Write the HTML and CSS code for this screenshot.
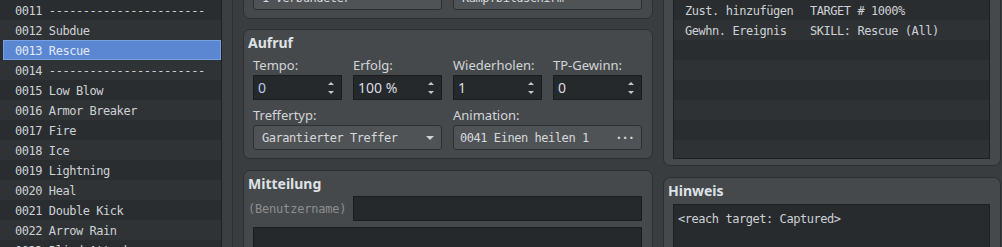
FILE: index.html
```html
<!DOCTYPE html>
<html lang="de">
<head>
<meta charset="utf-8">
<title>Fertigkeiten</title>
<link rel="stylesheet" href="styles.css">
</head>
<body>
<div class="app">
  <aside class="sidebar">
    <ul class="list">
      <li class="row">0011 -----------------------</li>
      <li class="row">0012 Subdue</li>
      <li class="row sel">0013 Rescue</li>
      <li class="row">0014 -----------------------</li>
      <li class="row">0015 Low Blow</li>
      <li class="row">0016 Armor Breaker</li>
      <li class="row">0017 Fire</li>
      <li class="row">0018 Ice</li>
      <li class="row">0019 Lightning</li>
      <li class="row">0020 Heal</li>
      <li class="row">0021 Double Kick</li>
      <li class="row">0022 Arrow Rain</li>
      <li class="row">0023 Blind Attack</li>
    </ul>
  </aside>
  <div class="splitter"></div>
  <main class="main">
    <div class="col mid">
      <section class="box">
        <div class="grid">
          <div class="field span2">
            <span class="lbl">Umfang:</span>
            <div class="combo"><span>1 Verbündeter</span><i class="caret"></i></div>
          </div>
          <div class="field span2">
            <span class="lbl">Anlass:</span>
            <div class="combo"><span>Kampfbildschirm</span><i class="caret"></i></div>
          </div>
        </div>
      </section>

      <section class="box aufruf">
        <h2 class="ttl">Aufruf</h2>
        <div class="grid">
          <div class="field">
            <span class="lbl">Tempo:</span>
            <div class="spin"><span class="val focus">0</span><span class="arrows"><i class="up"></i><i class="down"></i></span></div>
          </div>
          <div class="field">
            <span class="lbl">Erfolg:</span>
            <div class="spin"><span class="val">100 %</span><span class="arrows"><i class="up"></i><i class="down"></i></span></div>
          </div>
          <div class="field">
            <span class="lbl">Wiederholen:</span>
            <div class="spin"><span class="val">1</span><span class="arrows"><i class="up"></i><i class="down"></i></span></div>
          </div>
          <div class="field">
            <span class="lbl">TP-Gewinn:</span>
            <div class="spin"><span class="val">0</span><span class="arrows"><i class="up"></i><i class="down"></i></span></div>
          </div>
          <div class="field span2">
            <span class="lbl">Treffertyp:</span>
            <div class="combo"><span>Garantierter Treffer</span><i class="caret"></i></div>
          </div>
          <div class="field span2">
            <span class="lbl">Animation:</span>
            <div class="combo picker"><span>0041 Einen heilen 1</span><span class="dots">···</span></div>
          </div>
        </div>
      </section>

      <section class="box mitteilung">
        <h2 class="ttl tight">Mitteilung</h2>
        <div class="msgrow">
          <span class="msglbl">(Benutzername)</span>
          <div class="textbox"></div>
        </div>
        <div class="msgarea"></div>
      </section>
    </div>

    <div class="col right">
      <section class="box fxbox">
        <h2 class="ttl fxttl">Effekte</h2>
        <div class="fx">
          <div class="fxrow"><span class="c1">Zust. hinzufügen</span><span>TARGET # 1000%</span></div>
          <div class="fxrow"><span class="c1">Gewhn. Ereignis</span><span>SKILL: Rescue (All)</span></div>
          <div class="fxrow"></div>
          <div class="fxrow"></div>
          <div class="fxrow"></div>
          <div class="fxrow"></div>
          <div class="fxrow"></div>
          <div class="fxrow"></div>
        </div>
      </section>

      <section class="box hinweis">
        <h2 class="ttl">Hinweis</h2>
        <div class="hint">&lt;reach target: Captured&gt;</div>
      </section>
    </div>
  </main>
</div>
</body>
</html>
```

FILE: styles.css
```css
* { box-sizing: border-box; margin: 0; padding: 0; }
html, body { height: 100%; }
body {
  background: #3a3d40;
  overflow: hidden;
  font-family: "Noto Sans", "Open Sans", sans-serif;
  color: #d4d7da;
}
.app { display: flex; height: 247px; overflow: hidden; }

/* shared monospace text */
.list, .combo, .msglbl, .fx, .hint {
  font-family: "DejaVu Sans Mono", monospace;
  font-size: 12px;
  letter-spacing: -0.45px;
}

/* left list */
.sidebar {
  width: 222px; flex: none;
  background: #2a2d30;
  border-right: 1px solid #1e2022;
  overflow: hidden;
}
.list { list-style: none; color: #cdd1d5; }
.row {
  height: 20px;
  padding: 3px 0 0 15px;
  line-height: 17px;
  white-space: pre;
}
.row:nth-child(even) { background: #303336; }
.row.sel {
  margin-left: 3px;
  padding: 2px 0 0 11px;
  background: #5a86d2;
  border: 1px solid #79a0e2;
  color: #e3ebf7;
}

.splitter {
  width: 11px; flex: none;
  background: #3c3f42;
  border-right: 1px solid #2e3033;
}

.main { flex: 1; display: flex; gap: 10px; padding: 0 1px 0 10px; }
.col { display: flex; flex-direction: column; }
.mid { width: 410px; flex: none; margin-top: -38px; }
.right { width: 338px; flex: none; margin-top: -26px; }

.box {
  background: #46494c;
  border: 1px solid #2c2f32;
  border-radius: 7px;
  padding: 3px 10px 8px 4px;
}
.aufruf { margin-top: 10px; }
.mitteilung { margin-top: 11px; flex: 1; }
.ttl {
  font-size: 14px; font-weight: 700;
  line-height: 20px;
  margin-bottom: 3px;
  color: #dfe2e5;
}
.ttl.tight { margin-bottom: 2px; }

.grid {
  display: grid;
  grid-template-columns: repeat(4, 89px);
  column-gap: 11px;
  row-gap: 6px;
  margin-left: 5px;
}
.field { display: flex; flex-direction: column; gap: 1px; }
.span2 { grid-column: span 2; }
.lbl { font-size: 13px; line-height: 18px; color: #d2d5d8; }

.spin {
  height: 25px;
  background: #26292c;
  border: 1px solid #1a1c1e;
  display: flex; align-items: center;
  padding-left: 4px;
  font-size: 14px;
  color: #dadde0;
}
.val.focus { color: #b9cde9; }
.arrows {
  margin-left: auto; margin-right: 7px;
  display: flex; flex-direction: column; gap: 6px;
}
.arrows i { display: block; width: 0; height: 0; border-left: 3px solid transparent; border-right: 3px solid transparent; }
.arrows .up { border-bottom: 3px solid #c5c8cb; }
.arrows .down { border-top: 3px solid #c5c8cb; }

.combo {
  height: 25px;
  background: #505356;
  border: 1px solid #2d3033;
  border-radius: 3px;
  display: flex; align-items: center;
  padding: 0 7px 0 8px;
  color: #d6d9dc;
}
.combo.picker { padding-left: 6px; }
.caret {
  margin-left: auto;
  width: 0; height: 0;
  border-left: 4px solid transparent;
  border-right: 4px solid transparent;
  border-top: 4px solid #d0d3d6;
}
.dots { margin-left: auto; letter-spacing: -1px; font-weight: 700; }

.msgrow { display: flex; align-items: center; }
.msglbl {
  width: 105px; flex: none;
  letter-spacing: -0.2px;
  color: #8b8e91;
}
.textbox {
  flex: 1; height: 25px;
  background: #26292c;
  border: 1px solid #1a1c1e;
}
.msgarea {
  margin: 6px 0 0 5px;
  height: 60px;
  background: #26292c;
  border: 1px solid #1a1c1e;
}

.fxbox { padding-bottom: 6px; }
.fxttl { margin-bottom: 1px; }
.fx {
  margin-left: 5px;
  height: 160px;
  background: #2a2d30;
  border: 1px solid #1d1f21;
  overflow: hidden;
  color: #cdd1d5;
}
.fxrow {
  height: 20px;
  padding: 3px 0 0 11px;
  line-height: 17px;
  display: flex;
  white-space: pre;
}
.fxrow:nth-child(even) { background: #2f3235; }
.c1 { width: 125px; flex: none; }

.hinweis { margin-top: 11px; flex: 1; }
.hint {
  margin-left: 5px;
  height: 60px;
  background: #282b2e;
  border: 1px solid #1d1f21;
  padding: 4px;
  line-height: 20px;
  color: #cdd1d5;
}
```
